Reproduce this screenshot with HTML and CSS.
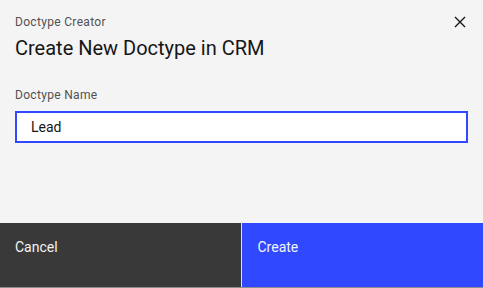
FILE: index.html
```html
<!DOCTYPE html>
<html lang="en">
<head>
  <meta charset="UTF-8">
  <title>Doctype Creator</title>
  <link rel="stylesheet" href="styles.css">
</head>
<body>

<div class="modal">
  <div class="modal-header">
    <div class="modal-label">Doctype Creator</div>
    <h2 class="modal-title">Create New Doctype in CRM</h2>
    <button class="modal-close" aria-label="Close">
      <svg width="12" height="12" viewBox="0 0 12 12"><path d="M1 1L11 11M11 1L1 11" stroke="#161616" stroke-width="1.4" fill="none"/></svg>
    </button>
  </div>
  <div class="modal-body">
    <label class="field-label" for="doctype-name">Doctype Name</label>
    <input class="field-input" id="doctype-name" type="text" value="Lead">
  </div>
  <div class="modal-footer">
    <button class="btn btn-secondary">Cancel</button>
    <button class="btn btn-primary">Create</button>
  </div>
</div>

</body>
</html>
```

FILE: styles.css
```css
body {
  margin: 0;
  font-family: Roboto, 'Noto Sans', sans-serif;
  background: #f4f4f4;
  color: #161616;
}
.modal {
  width: 483px;
  height: 288px;
  display: flex;
  flex-direction: column;
  background: #f4f4f4;
}
.modal-header {
  position: relative;
  padding: 14px 15px 0;
}
.modal-label {
  font-size: 12px;
  line-height: 16px;
  color: #525252;
  letter-spacing: 0.32px;
}
.modal-title {
  margin: 4px 0 0;
  font-size: 20px;
  line-height: 28px;
  font-weight: 400;
}
.modal-close {
  position: absolute;
  top: 16px;
  right: 17px;
  padding: 0;
  border: 0;
  background: none;
  width: 12px;
  height: 12px;
  cursor: pointer;
}
.modal-body {
  flex: 1;
  padding: 25px 15px 0;
}
.field-label {
  display: block;
  font-size: 12px;
  line-height: 16px;
  color: #525252;
  letter-spacing: 0.32px;
  margin-bottom: 8px;
}
.field-input {
  box-sizing: border-box;
  width: 453px;
  height: 32px;
  border: 2px solid #3048ff;
  background: #fff;
  padding: 0 14px;
  font-family: inherit;
  font-size: 14px;
  color: #161616;
  outline: none;
}
.modal-footer {
  display: flex;
  height: 65px;
  border-bottom: 1px solid #8d8d8d;
  box-sizing: border-box;
}
.btn {
  flex: 1;
  border: 0;
  margin: 0;
  padding: 15px 16px 0 15px;
  font-family: inherit;
  font-size: 14px;
  line-height: 18px;
  display: flex;
  align-items: flex-start;
  color: #f4f4f4;
  cursor: pointer;
}
.btn-secondary {
  background: #393939;
  border-right: 1px solid #e0e0e0;
}
.btn-primary {
  background: #3048ff;
  padding-left: 16px;
}
```
